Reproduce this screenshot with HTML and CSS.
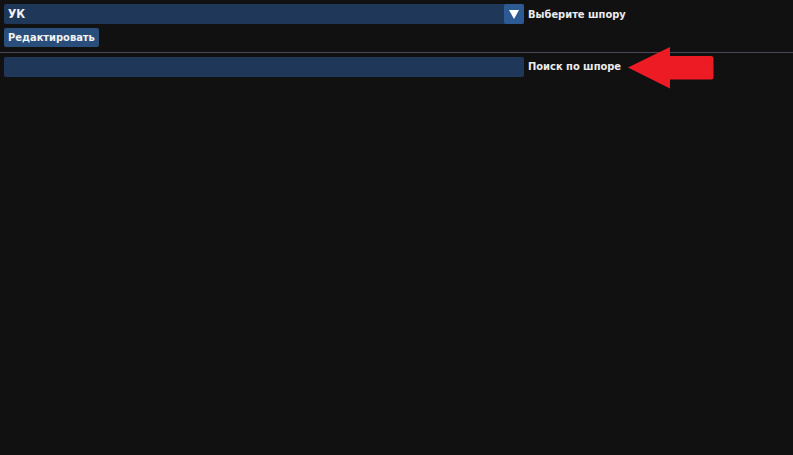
FILE: index.html
```html
<!DOCTYPE html>
<html>
	<head>
		<meta charset="UTF-8">
		<title>Шпора</title>
		<link rel="stylesheet" href="styles.css">
	</head>
	<body>
		<div class="top">
			<div class="row">
				<div class="select">
					<span class="select-text">УК</span>
					<span class="select-btn"><i class="tri"></i></span>
				</div>
				<span class="label">Выберите шпору</span>
			</div>
			<div class="row row2">
				<button class="btn">Редактировать</button>
			</div>
		</div>
		<div class="sep"></div>
		<div class="bottom">
			<div class="row">
				<input class="search" type="text" value="">
				<span class="label">Поиск по шпоре</span>
				<svg class="arrow" width="86" height="42" viewBox="0 0 86 42">
					<path d="M0 20.5 L42 0 L42 9 L83 9 Q85.5 9 85.5 11.5 L85.5 30 Q85.5 32.5 83 32.5 L42 32.5 L42 41.5 Z" fill="#ed1c24"/>
				</svg>
			</div>
		</div>
	</body>
</html>
```

FILE: styles.css
```css
*{ margin: 0; padding: 0; box-sizing: border-box;}
html,body{ width: 100%; height: 100%;}
body{ background: #111111; font-family: "DejaVu Sans Condensed", "DejaVu Sans", sans-serif; font-weight: bold; color: #ececec; overflow: hidden;}
.top{ padding: 4px 4px 0 4px;}
.row{ display: flex; align-items: center;}
.row2{ margin-top: 4px;}
.select{ width: 520px; height: 20px; background: #1f3759; border-radius: 2px; display: flex; align-items: center; justify-content: space-between;}
.select-text{ font-size: 12px; padding-left: 4px; color: #f2f2f2;}
.select-btn{ width: 20px; height: 20px; background: #2e5a93; border-radius: 2px; display: flex; align-items: center; justify-content: center;}
.tri{ width: 0; height: 0; border-left: 5px solid transparent; border-right: 5px solid transparent; border-top: 9px solid #ffffff;}
.label{ font-size: 11px; margin-left: 4px; white-space: nowrap;}
.btn{ height: 19px; padding: 0 4px; background: #2a4e7b; color: #f2f2f2; border: none; border-radius: 2px; font-family: "DejaVu Sans Condensed", "DejaVu Sans", sans-serif; font-weight: bold; font-size: 11px;}
.sep{ margin-top: 5px; height: 1px; background: #4d4558;}
.bottom{ padding: 3px 4px 0 4px;}
.search{ width: 520px; height: 20px; background: #1f3759; border: none; border-radius: 2px; outline: none;}
.arrow{ display: block; margin: -9px 0 -12px 7px;}
```
